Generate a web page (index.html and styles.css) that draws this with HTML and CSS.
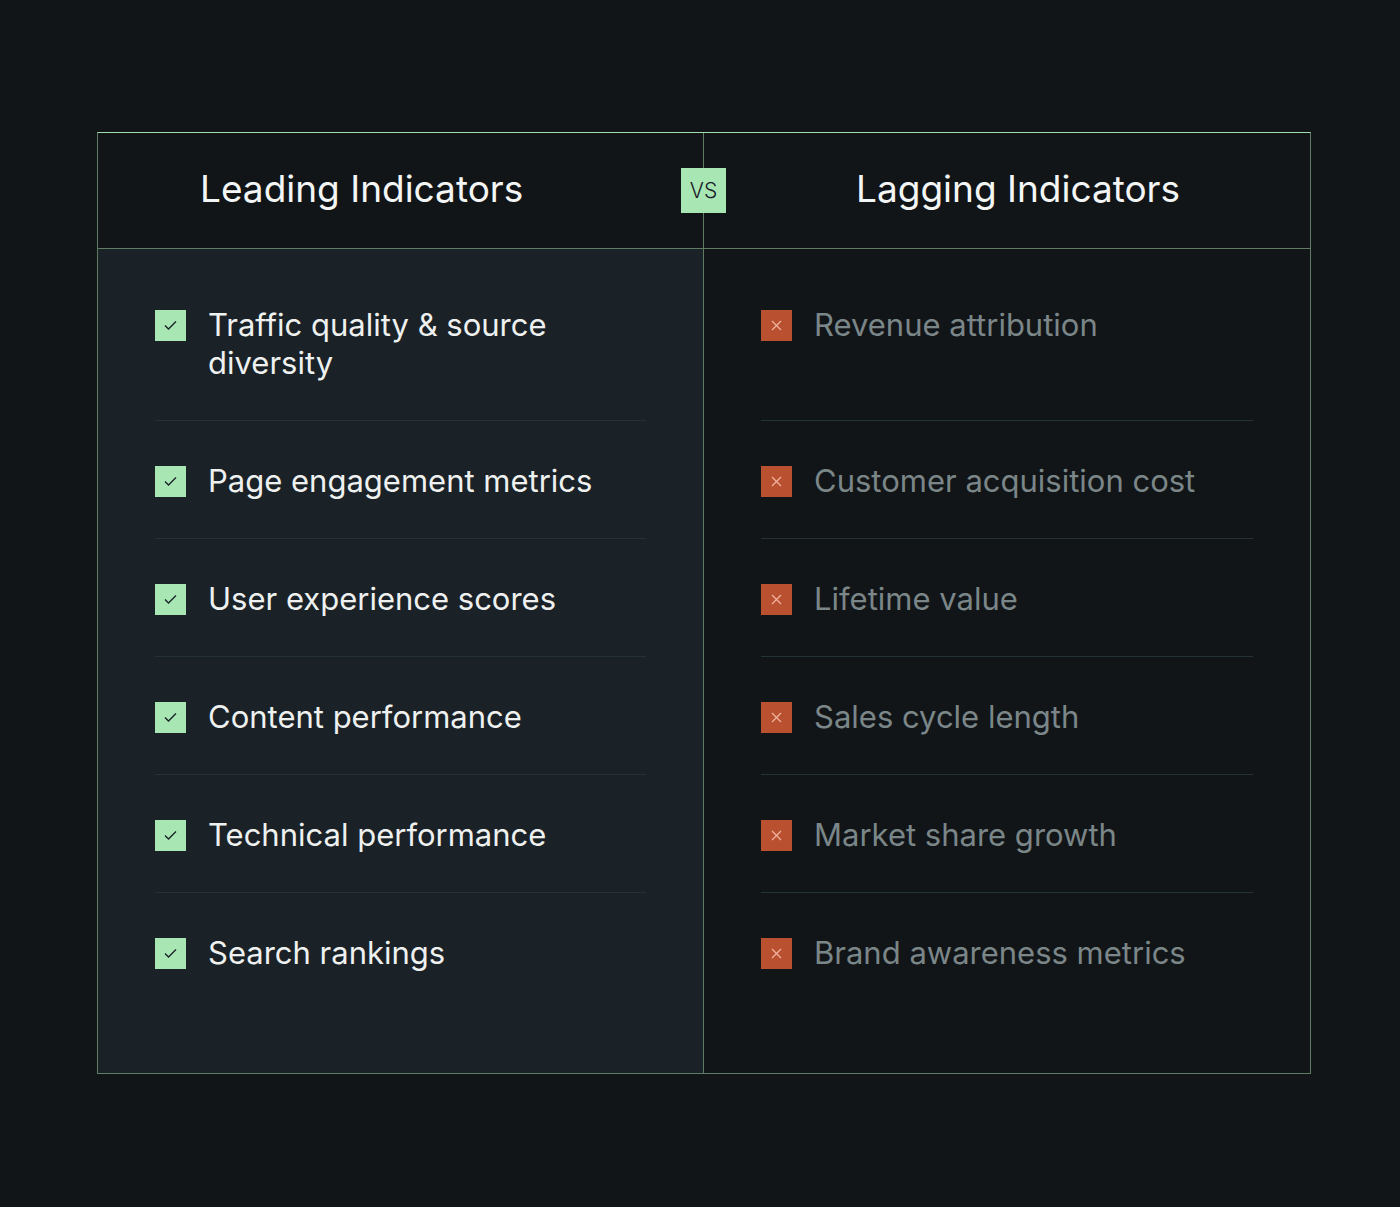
FILE: index.html
```html
<!DOCTYPE html>
<html lang="en">
<head>
<meta charset="utf-8">
<title>Leading vs Lagging Indicators</title>
<link rel="stylesheet" href="styles.css">
</head>
<body>
<main class="page">
  <section class="compare">
    <header class="compare-head">
      <div class="head-cell head-left"><h2 class="title">Leading Indicators</h2></div>
      <div class="head-cell head-right"><h2 class="title">Lagging Indicators</h2></div>
      <span class="vs">VS</span>
    </header>
    <div class="compare-body">
      <ul class="col col-leading">
        <li class="row row-first"><span class="mark mark-yes"><svg viewBox="0 0 31 31" width="31" height="31"><path d="M10 15.5 L13.5 19 L21 11.5" fill="none" stroke="#1a2026" stroke-width="1.3"/></svg></span><span class="label">Traffic quality &amp; source diversity</span></li>
        <li class="row"><span class="mark mark-yes"><svg viewBox="0 0 31 31" width="31" height="31"><path d="M10 15.5 L13.5 19 L21 11.5" fill="none" stroke="#1a2026" stroke-width="1.3"/></svg></span><span class="label">Page engagement metrics</span></li>
        <li class="row"><span class="mark mark-yes"><svg viewBox="0 0 31 31" width="31" height="31"><path d="M10 15.5 L13.5 19 L21 11.5" fill="none" stroke="#1a2026" stroke-width="1.3"/></svg></span><span class="label">User experience scores</span></li>
        <li class="row"><span class="mark mark-yes"><svg viewBox="0 0 31 31" width="31" height="31"><path d="M10 15.5 L13.5 19 L21 11.5" fill="none" stroke="#1a2026" stroke-width="1.3"/></svg></span><span class="label">Content performance</span></li>
        <li class="row"><span class="mark mark-yes"><svg viewBox="0 0 31 31" width="31" height="31"><path d="M10 15.5 L13.5 19 L21 11.5" fill="none" stroke="#1a2026" stroke-width="1.3"/></svg></span><span class="label">Technical performance</span></li>
        <li class="row row-last"><span class="mark mark-yes"><svg viewBox="0 0 31 31" width="31" height="31"><path d="M10 15.5 L13.5 19 L21 11.5" fill="none" stroke="#1a2026" stroke-width="1.3"/></svg></span><span class="label">Search rankings</span></li>
      </ul>
      <ul class="col col-lagging">
        <li class="row row-first"><span class="mark mark-no"><svg viewBox="0 0 31 31" width="31" height="31"><path d="M11 11 L20 20 M20 11 L11 20" fill="none" stroke="#f2b4a2" stroke-width="1.2"/></svg></span><span class="label">Revenue attribution</span></li>
        <li class="row"><span class="mark mark-no"><svg viewBox="0 0 31 31" width="31" height="31"><path d="M11 11 L20 20 M20 11 L11 20" fill="none" stroke="#f2b4a2" stroke-width="1.2"/></svg></span><span class="label">Customer acquisition cost</span></li>
        <li class="row"><span class="mark mark-no"><svg viewBox="0 0 31 31" width="31" height="31"><path d="M11 11 L20 20 M20 11 L11 20" fill="none" stroke="#f2b4a2" stroke-width="1.2"/></svg></span><span class="label">Lifetime value</span></li>
        <li class="row"><span class="mark mark-no"><svg viewBox="0 0 31 31" width="31" height="31"><path d="M11 11 L20 20 M20 11 L11 20" fill="none" stroke="#f2b4a2" stroke-width="1.2"/></svg></span><span class="label">Sales cycle length</span></li>
        <li class="row"><span class="mark mark-no"><svg viewBox="0 0 31 31" width="31" height="31"><path d="M11 11 L20 20 M20 11 L11 20" fill="none" stroke="#f2b4a2" stroke-width="1.2"/></svg></span><span class="label">Market share growth</span></li>
        <li class="row row-last"><span class="mark mark-no"><svg viewBox="0 0 31 31" width="31" height="31"><path d="M11 11 L20 20 M20 11 L11 20" fill="none" stroke="#f2b4a2" stroke-width="1.2"/></svg></span><span class="label">Brand awareness metrics</span></li>
      </ul>
    </div>
  </section>
</main>
</body>
</html>
```

FILE: styles.css
```css
* { box-sizing: border-box; }
html, body {
  margin: 0;
  padding: 0;
  background: #111518;
}
body {
  font-family: Inter, "Liberation Sans", sans-serif;
  color: #eef1ef;
}
.page {
  padding: 132px 90px 0 97px;
}
.compare {
  width: 1214px;
  border: 1px solid #5d7c62;
  border-top-color: #a3dcae;
}
.compare-head {
  position: relative;
  display: grid;
  grid-template-columns: 606px 1fr;
  height: 116px;
  border-bottom: 1px solid #5d7c62;
}
.head-cell {
  display: flex;
  align-items: center;
  padding-bottom: 4px;
}
.head-left {
  border-right: 1px solid #5d7c62;
  padding-left: 102px;
}
.head-right {
  padding-left: 152px;
}
.title {
  margin: 0;
  font-weight: 400;
  font-size: 37px;
  letter-spacing: 0;
  color: #f4f6f5;
}
.vs {
  position: absolute;
  left: 583px;
  top: 35px;
  width: 45px;
  height: 45px;
  background: #a8e6b4;
  color: #1a2026;
  font-size: 21px;
  font-weight: 300;
  display: flex;
  align-items: center;
  justify-content: center;
}
.compare-body {
  display: grid;
  grid-template-columns: 606px 1fr;
}
.col {
  list-style: none;
  margin: 0;
  padding: 17px 57px 63px;
}
.col-leading {
  background: #1a2127;
  border-right: 1px solid #5d7c62;
}
.row {
  display: flex;
  align-items: flex-start;
  gap: 22px;
  padding: 41px 0 38px;
  border-bottom: 1px solid #253238;
  font-size: 31px;
  line-height: 38px;
  min-height: 118px;
}
.row-first { min-height: 155px; padding-top: 40px; }
.row-last { border-bottom: 0; min-height: 117px; }
.mark {
  flex: 0 0 31px;
  width: 31px;
  height: 31px;
  margin-top: 4px;
  display: block;
}
.mark svg { display: block; }
.mark-yes { background: #a8e6b4; }
.mark-no { background: #b9502f; }
.col-lagging .label { color: #7b8688; }
.col-leading .label { color: #eef1ef; }
```
